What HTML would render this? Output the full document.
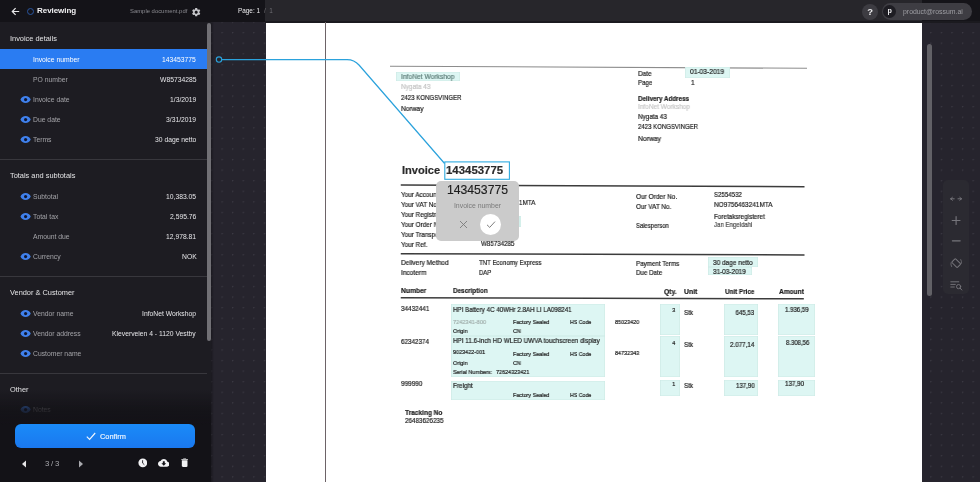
<!DOCTYPE html>
<html><head><meta charset="utf-8">
<style>
*{margin:0;padding:0;box-sizing:border-box}
html,body{width:980px;height:482px;overflow:hidden;-webkit-font-smoothing:antialiased}
body{position:relative;background-color:#26242d;font-family:"Liberation Sans",sans-serif;
background-image:radial-gradient(circle at 0.6px 0.6px,#3c3a44 0.6px,transparent 1px);
background-size:10.58px 10.58px;background-position:210.9px 32px}
.a{position:absolute}
.t{position:absolute;white-space:nowrap;line-height:10px;height:10px;will-change:transform}
.r{text-align:right}
#hdrL{left:0;top:0;width:265px;height:22px;background:#141318}
#hdrM{left:265px;top:0;width:657px;height:22px;background:#27262b}
#hdrR{left:922px;top:0;width:58px;height:22px;background:#151419}
#side{left:0;top:22px;width:211px;height:460px;background:#1d1c22}
#sfade{left:0;top:390px;width:211px;height:92px;background:linear-gradient(rgba(19,18,23,0),rgba(19,18,23,0.82) 22%,#131217 38%,#131217)}
#sthumb{left:207px;top:23px;width:4px;height:318px;background:#717075;border-radius:2px}
.sec{font-size:7.4px;color:#e4e4e6;left:10px}
.lab{font-size:6.8px;color:#a3a3a8;left:32.5px}
.val{font-size:6.78px;color:#e6e6e9;right:783.8px;text-align:right}
.div{left:0;width:207px;height:1px;background:#38373d}
.eye{position:absolute;width:11.2px;height:11.2px;left:19.9px}
#page{left:265.8px;top:22.5px;width:656.2px;height:460px;background:#fff}
.d{position:absolute;white-space:nowrap;line-height:10px;height:10px;color:#1e1e1e;font-size:6.2px;transform-origin:0 50%;will-change:transform;-webkit-text-stroke:0.2px currentColor}
.b{font-weight:bold}
.hl{position:absolute;background:#ddf6f3;box-shadow:inset 0 0 0 0.6px #cde9e5}
.ln{position:absolute;height:1.5px;background:#3a3a3a}
#wrapall{position:absolute;left:0;top:0;width:980px;height:482px}</style></head><body><div id="wrapall">
<!-- header -->
<div class="a" id="hdrL"></div>
<div class="a" id="hdrM"></div>
<div class="a" id="hdrR"></div>
<div class="a" style="left:265px;top:20.8px;width:715px;height:2.4px;background:#1b1a1f"></div>
<svg class="a" style="left:11px;top:7px" width="9" height="9" viewBox="0 0 9 9"><path d="M8.2 4.5H1.4M4.6 1.2L1.3 4.5l3.3 3.3" stroke="#e8e8ea" stroke-width="1.2" fill="none"/></svg>
<div class="a" style="left:27px;top:8px;width:7.2px;height:7.2px;border:1.15px solid #2a56a0;border-radius:50%"></div>
<div class="t b" style="left:37px;top:6.2px;font-size:8px;color:#f2f2f4;letter-spacing:-0.05px">Reviewing</div>
<div class="t" style="left:129.5px;top:5.8px;font-size:5.9px;color:#8a8a90">Sample document.pdf</div>
<svg class="a" style="left:190.7px;top:6.55px" width="10.4" height="10.4" viewBox="0 0 24 24"><path fill="#c6c6ca" d="M19.14 12.94c.04-.3.06-.61.06-.94 0-.32-.02-.64-.07-.94l2.03-1.58a.49.49 0 0 0 .12-.61l-1.92-3.32a.488.488 0 0 0-.59-.22l-2.39.96c-.5-.38-1.03-.7-1.62-.94l-.36-2.54a.484.484 0 0 0-.48-.41h-3.84c-.24 0-.43.17-.47.41l-.36 2.54c-.59.24-1.13.57-1.62.94l-2.39-.96c-.22-.08-.47 0-.59.22L2.74 8.87c-.12.21-.08.47.12.61l2.03 1.58c-.05.3-.09.63-.09.94s.02.64.07.94l-2.03 1.58a.49.49 0 0 0-.12.61l1.92 3.32c.12.22.37.29.59.22l2.39-.96c.5.38 1.03.7 1.62.94l.36 2.54c.05.24.24.41.48.41h3.84c.24 0 .44-.17.47-.41l.36-2.54c.59-.24 1.13-.56 1.62-.94l2.39.96c.22.08.47 0 .59-.22l1.92-3.32c.12-.22.07-.47-.12-.61l-2.01-1.58zM12 15.6c-1.98 0-3.6-1.62-3.6-3.6s1.62-3.6 3.6-3.6 3.6 1.62 3.6 3.6-1.62 3.6-3.6 3.6z"/></svg>
<div class="t" style="left:237.5px;top:6px;font-size:6.4px;color:#ededef">Page: 1</div>
<div class="t" style="left:264px;top:6px;font-size:6.4px;color:#6f6e73">/&nbsp;&nbsp;1</div>
<div class="a" style="left:861.8px;top:3.6px;width:16.2px;height:16.2px;border-radius:50%;background:#3d3c42"></div>
<div class="t b" style="left:865px;top:6.8px;width:10px;text-align:center;font-size:9.4px;color:#ececee">?</div>
<div class="a" style="left:881.8px;top:3px;width:90.2px;height:17px;border-radius:8.5px;background:#3e3d43"></div>
<div class="a" style="left:883px;top:4.8px;width:13.4px;height:13.4px;border-radius:50%;background:#1e1d23"></div>
<div class="t b" style="left:883px;top:6.2px;width:13.4px;text-align:center;font-size:7.2px;color:#e6e6e8">p</div>
<div class="t" style="left:903px;top:6.5px;font-size:6.9px;color:#9f9fa4">product@rossum.ai</div>

<!-- sidebar -->
<div class="a" id="side"></div>
<div class="a" style="left:0;top:49px;width:207px;height:20px;background:#2a7cf2"></div>
<div class="t sec" style="top:34.2px">Invoice details</div>
<div class="t lab" style="top:54.7px;color:#fff">Invoice number</div><div class="t val" style="top:54.7px;color:#fff">143453775</div>
<div class="t lab" style="top:74.7px">PO number</div><div class="t val" style="top:74.7px">W85734285</div>
<div class="t lab" style="top:94.7px">Invoice date</div><div class="t val" style="top:94.7px">1/3/2019</div>
<div class="t lab" style="top:114.7px">Due date</div><div class="t val" style="top:114.7px">3/31/2019</div>
<div class="t lab" style="top:134.7px">Terms</div><div class="t val" style="top:134.7px">30 dage netto</div>
<div class="a div" style="top:159px"></div>
<div class="t sec" style="top:171.2px">Totals and subtotals</div>
<div class="t lab" style="top:191.7px">Subtotal</div><div class="t val" style="top:191.7px">10,383.05</div>
<div class="t lab" style="top:211.7px">Total tax</div><div class="t val" style="top:211.7px">2,595.76</div>
<div class="t lab" style="top:231.7px">Amount due</div><div class="t val" style="top:231.7px">12,978.81</div>
<div class="t lab" style="top:251.7px">Currency</div><div class="t val" style="top:251.7px">NOK</div>
<div class="a div" style="top:276px"></div>
<div class="t sec" style="top:288.2px">Vendor &amp; Customer</div>
<div class="t lab" style="top:308.7px">Vendor name</div><div class="t val" style="top:308.7px">InfoNet Workshop</div>
<div class="t lab" style="top:328.7px">Vendor address</div><div class="t val" style="top:328.7px">Kleverveien 4 - 1120 Vestby</div>
<div class="t lab" style="top:348.7px">Customer name</div>
<div class="a div" style="top:373px"></div>
<div class="t sec" style="top:385.2px">Other</div>
<div class="t lab" style="top:405.2px">Notes</div>
<!-- eyes -->
<svg class="eye" style="top:94.1px" viewBox="0 0 24 24"><path fill="#3f80ec" d="M12 4.5C7 4.5 2.73 7.61 1 12c1.73 4.39 6 7.5 11 7.5s9.27-3.11 11-7.5c-1.73-4.39-6-7.5-11-7.5z"/><circle cx="12" cy="12" r="3.4" fill="#101630"/></svg>
<svg class="eye" style="top:114.1px" viewBox="0 0 24 24"><path fill="#3f80ec" d="M12 4.5C7 4.5 2.73 7.61 1 12c1.73 4.39 6 7.5 11 7.5s9.27-3.11 11-7.5c-1.73-4.39-6-7.5-11-7.5z"/><circle cx="12" cy="12" r="3.4" fill="#101630"/></svg>
<svg class="eye" style="top:134.1px" viewBox="0 0 24 24"><path fill="#3f80ec" d="M12 4.5C7 4.5 2.73 7.61 1 12c1.73 4.39 6 7.5 11 7.5s9.27-3.11 11-7.5c-1.73-4.39-6-7.5-11-7.5z"/><circle cx="12" cy="12" r="3.4" fill="#101630"/></svg>
<svg class="eye" style="top:191.1px" viewBox="0 0 24 24"><path fill="#3f80ec" d="M12 4.5C7 4.5 2.73 7.61 1 12c1.73 4.39 6 7.5 11 7.5s9.27-3.11 11-7.5c-1.73-4.39-6-7.5-11-7.5z"/><circle cx="12" cy="12" r="3.4" fill="#101630"/></svg>
<svg class="eye" style="top:211.1px" viewBox="0 0 24 24"><path fill="#3f80ec" d="M12 4.5C7 4.5 2.73 7.61 1 12c1.73 4.39 6 7.5 11 7.5s9.27-3.11 11-7.5c-1.73-4.39-6-7.5-11-7.5z"/><circle cx="12" cy="12" r="3.4" fill="#101630"/></svg>
<svg class="eye" style="top:251.1px" viewBox="0 0 24 24"><path fill="#3f80ec" d="M12 4.5C7 4.5 2.73 7.61 1 12c1.73 4.39 6 7.5 11 7.5s9.27-3.11 11-7.5c-1.73-4.39-6-7.5-11-7.5z"/><circle cx="12" cy="12" r="3.4" fill="#101630"/></svg>
<svg class="eye" style="top:308.1px" viewBox="0 0 24 24"><path fill="#3f80ec" d="M12 4.5C7 4.5 2.73 7.61 1 12c1.73 4.39 6 7.5 11 7.5s9.27-3.11 11-7.5c-1.73-4.39-6-7.5-11-7.5z"/><circle cx="12" cy="12" r="3.4" fill="#101630"/></svg>
<svg class="eye" style="top:328.1px" viewBox="0 0 24 24"><path fill="#3f80ec" d="M12 4.5C7 4.5 2.73 7.61 1 12c1.73 4.39 6 7.5 11 7.5s9.27-3.11 11-7.5c-1.73-4.39-6-7.5-11-7.5z"/><circle cx="12" cy="12" r="3.4" fill="#101630"/></svg>
<svg class="eye" style="top:348.1px" viewBox="0 0 24 24"><path fill="#3f80ec" d="M12 4.5C7 4.5 2.73 7.61 1 12c1.73 4.39 6 7.5 11 7.5s9.27-3.11 11-7.5c-1.73-4.39-6-7.5-11-7.5z"/><circle cx="12" cy="12" r="3.4" fill="#101630"/></svg>
<svg class="eye" style="top:404.4px" viewBox="0 0 24 24"><path fill="#3f80ec" d="M12 4.5C7 4.5 2.73 7.61 1 12c1.73 4.39 6 7.5 11 7.5s9.27-3.11 11-7.5c-1.73-4.39-6-7.5-11-7.5z"/><circle cx="12" cy="12" r="3.4" fill="#101630"/></svg>
<div class="a" id="sfade"></div>
<div class="a" id="sthumb"></div>
<div class="a" style="left:211px;top:22px;width:3px;height:460px;background:linear-gradient(90deg,rgba(18,17,22,0.6),rgba(18,17,22,0))"></div>
<!-- confirm -->
<div class="a" style="left:15px;top:424.3px;width:180px;height:23.6px;border-radius:6px;background:linear-gradient(#1a8bf8,#1a78ef)"></div>
<svg class="a" style="left:86px;top:432px" width="10" height="9" viewBox="0 0 10 9"><path d="M0.8 4.6L3.6 7.4 9.2 1" stroke="#f0f7ff" stroke-width="1.15" fill="none"/></svg>
<div class="t" style="left:100px;top:432.1px;font-size:7.4px;color:#eef6ff;-webkit-text-stroke:0.15px #eef6ff">Confirm</div>
<!-- bottom bar -->
<svg class="a" style="left:21px;top:460px" width="6" height="8" viewBox="0 0 6 8"><path d="M5 0.5L1 4l4 3.5z" fill="#e6e6e8"/></svg>
<div class="t" style="left:44.8px;top:459px;font-size:7.8px;color:#a9a9ae;letter-spacing:-0.2px">3 / 3</div>
<svg class="a" style="left:78px;top:460px" width="6" height="8" viewBox="0 0 6 8"><path d="M1 0.5L5 4 1 7.5z" fill="#a9a9ae"/></svg>
<svg class="a" style="left:137.7px;top:458.2px" width="9.6" height="9.6" viewBox="0 0 10 10"><circle cx="5" cy="5" r="4.6" fill="#f2f2f4"/><path d="M4.8 2.3V5.3L6.6 7" stroke="#141318" stroke-width="0.9" fill="none"/></svg>
<svg class="a" style="left:157.7px;top:457.2px" width="11.6" height="11.6" viewBox="0 0 24 24"><path fill="#f2f2f4" d="M19.35 10.04C18.67 6.59 15.64 4 12 4 9.11 4 6.6 5.64 5.35 8.04 2.34 8.36 0 10.91 0 14c0 3.31 2.69 6 6 6h13c2.76 0 5-2.24 5-5 0-2.64-2.05-4.78-4.65-4.96zM17 13l-5 5-5-5h3V9h4v4h3z"/></svg>
<svg class="a" style="left:179px;top:457.3px" width="11.3" height="11.3" viewBox="0 0 24 24"><path fill="#f2f2f4" d="M6 19c0 1.1.9 2 2 2h8c1.1 0 2-.9 2-2V7H6v12zM19 4h-3.5l-1-1h-5l-1 1H5v2h14V4z"/></svg>

<!-- document page -->
<div class="a" id="page"></div>
<!--DOC-->
<svg class="a" style="left:0;top:0" width="980" height="482"><line x1="390" y1="66.2" x2="807" y2="68.3" stroke="#8c8c8c" stroke-width="1.1"/><line x1="400.75" y1="184.9" x2="804.5" y2="186.8" stroke="#3c3c3c" stroke-width="1.5"/><line x1="400.75" y1="253.8" x2="804.5" y2="254.9" stroke="#3c3c3c" stroke-width="1.5"/><line x1="400.75" y1="297.7" x2="803.8" y2="298.8" stroke="#3c3c3c" stroke-width="1.5"/></svg>
<div class="hl" style="left:396px;top:72.2px;width:63.8px;height:9.3px"></div>
<div class="hl" style="left:685px;top:66.8px;width:44.7px;height:11.6px"></div>
<div class="hl" style="left:708px;top:256.8px;width:49.8px;height:10.2px"></div>
<div class="hl" style="left:708px;top:267px;width:43.5px;height:8.4px"></div>
<div class="hl" style="left:451.4px;top:304.1px;width:154.1px;height:32.0px"></div>
<div class="hl" style="left:451.4px;top:336.1px;width:154.1px;height:40.6px"></div>
<div class="hl" style="left:451.4px;top:380.6px;width:154.1px;height:19.0px"></div>
<div class="hl" style="left:660px;top:304.1px;width:19.9px;height:30.7px"></div>
<div class="hl" style="left:660px;top:335.5px;width:19.9px;height:41.1px"></div>
<div class="hl" style="left:660px;top:380.3px;width:19.9px;height:15.5px"></div>
<div class="hl" style="left:724.2px;top:304.1px;width:34.1px;height:30.7px"></div>
<div class="hl" style="left:724.2px;top:335.5px;width:34.1px;height:41.1px"></div>
<div class="hl" style="left:724.2px;top:380.3px;width:34.1px;height:15.5px"></div>
<div class="hl" style="left:778.2px;top:304.1px;width:37.3px;height:30.7px"></div>
<div class="hl" style="left:778.2px;top:335.5px;width:37.3px;height:41.1px"></div>
<div class="hl" style="left:778.2px;top:380.3px;width:37.3px;height:15.5px"></div>
<div class="hl" style="left:518.5px;top:216px;width:2.1px;height:11.4px"></div>
<div class="d" style="top:72.40px;font-size:7.0px;left:400.5px;transform:scaleX(0.957);color:#5f7f7a;">InfoNet Workshop</div>
<div class="d" style="top:82.40px;font-size:7.0px;left:400.5px;transform:scaleX(0.924);color:#c4c4c4;">Nygata 43</div>
<div class="d" style="top:92.90px;font-size:7.0px;left:400.5px;transform:scaleX(0.869);">2423 KONGSVINGER</div>
<div class="d" style="top:104.00px;font-size:7.0px;left:400.5px;transform:scaleX(0.948);">Norway</div>
<div class="d" style="top:68.60px;font-size:7.0px;left:638.2px;transform:scaleX(0.919);">Date</div>
<div class="d" style="top:67.40px;font-size:7.0px;left:690px;transform:scaleX(0.949);">01-03-2019</div>
<div class="d" style="top:78.30px;font-size:7.0px;left:638.2px;transform:scaleX(0.874);">Page</div>
<div class="d" style="top:78.40px;font-size:7.0px;left:691px;transform:scaleX(0.910);">1</div>
<div class="d b" style="top:93.80px;font-size:6.9px;left:638px;transform:scaleX(0.910);">Delivery Address</div>
<div class="d" style="top:102.40px;font-size:7.0px;left:638px;transform:scaleX(0.930);color:#c8c8c8;">InfoNet Workshop</div>
<div class="d" style="top:111.60px;font-size:7.0px;left:638px;transform:scaleX(0.908);">Nygata 43</div>
<div class="d" style="top:121.90px;font-size:7.0px;left:638px;transform:scaleX(0.862);">2423 KONGSVINGER</div>
<div class="d" style="top:133.90px;font-size:7.0px;left:638px;transform:scaleX(0.969);">Norway</div>
<div class="d b" style="top:165.20px;font-size:11.0px;left:402px;transform:scaleX(1.008);color:#2b2b2b;">Invoice</div>
<div class="d b" style="top:165.20px;font-size:11.0px;left:445.9px;transform:scaleX(1.037);color:#2b2b2b;">143453775</div>
<div class="d" style="top:189.60px;font-size:7.0px;left:400.8px;transform:scaleX(0.910);">Your Account No.</div>
<div class="d" style="top:199.70px;font-size:7.0px;left:400.8px;transform:scaleX(0.910);">Your VAT No.</div>
<div class="d" style="top:209.80px;font-size:7.0px;left:400.8px;transform:scaleX(0.910);">Your Registration No.</div>
<div class="d" style="top:219.90px;font-size:7.0px;left:400.8px;transform:scaleX(0.910);">Your Order No.</div>
<div class="d" style="top:230.00px;font-size:7.0px;left:400.8px;transform:scaleX(0.910);">Your Transport No.</div>
<div class="d" style="top:240.10px;font-size:7.0px;left:400.8px;transform:scaleX(0.910);">Your Ref.</div>
<div class="d" style="top:197.60px;font-size:7.0px;left:477.5px;transform:scaleX(0.901);">NO9756463241MTA</div>
<div class="d" style="top:239.20px;font-size:7.0px;left:480.5px;transform:scaleX(0.887);">W85734285</div>
<div class="d" style="top:191.60px;font-size:7.0px;left:635.8px;transform:scaleX(0.929);">Our Order No.</div>
<div class="d" style="top:201.70px;font-size:7.0px;left:635.8px;transform:scaleX(0.905);">Our VAT No.</div>
<div class="d" style="top:221.40px;font-size:7.0px;left:635.8px;transform:scaleX(0.840);">Salesperson</div>
<div class="d" style="top:189.90px;font-size:7.0px;left:714.2px;transform:scaleX(0.871);">S2554532</div>
<div class="d" style="top:199.90px;font-size:7.0px;left:714.2px;transform:scaleX(0.919);">NO9756463241MTA</div>
<div class="d" style="top:211.70px;font-size:7.0px;left:714.2px;transform:scaleX(0.900);">Foretaksregisteret</div>
<div class="d" style="top:219.60px;font-size:7.0px;left:714.2px;transform:scaleX(0.865);color:#4a4a4a;">Jan Engeldahl</div>
<div class="d" style="top:257.50px;font-size:7.0px;left:400.5px;transform:scaleX(0.941);">Delivery Method</div>
<div class="d" style="top:267.60px;font-size:7.0px;left:400.5px;transform:scaleX(0.936);">Incoterm</div>
<div class="d" style="top:258.10px;font-size:7.0px;left:478.8px;transform:scaleX(0.870);">TNT Economy Express</div>
<div class="d" style="top:267.90px;font-size:7.0px;left:478.8px;transform:scaleX(0.847);">DAP</div>
<div class="d" style="top:258.80px;font-size:7.0px;left:635.8px;transform:scaleX(0.891);">Payment Terms</div>
<div class="d" style="top:267.70px;font-size:7.0px;left:635.8px;transform:scaleX(0.886);">Due Date</div>
<div class="d" style="top:258.00px;font-size:7.0px;left:713px;transform:scaleX(0.925);">30 dage netto</div>
<div class="d" style="top:267.00px;font-size:7.0px;left:713px;transform:scaleX(0.913);">31-03-2019</div>
<div class="d b" style="top:285.60px;font-size:6.9px;left:401px;transform:scaleX(0.975);">Number</div>
<div class="d b" style="top:286.20px;font-size:6.9px;left:452.8px;transform:scaleX(0.915);">Description</div>
<div class="d b" style="top:286.60px;font-size:6.9px;left:663.7px;transform:scaleX(0.962);">Qty.</div>
<div class="d b" style="top:286.60px;font-size:6.9px;left:684.4px;transform:scaleX(1.000);">Unit</div>
<div class="d b" style="top:286.60px;font-size:6.9px;left:725px;transform:scaleX(0.914);">Unit Price</div>
<div class="d b" style="top:286.60px;font-size:6.9px;left:779.4px;transform:scaleX(0.957);">Amount</div>
<div class="d" style="top:304.40px;font-size:7.0px;left:401px;transform:scaleX(0.910);">34432441</div>
<div class="d" style="top:305.20px;font-size:7.0px;left:453px;transform:scaleX(0.889);">HPI Battery 4C 40WHr 2.8AH LI LA098241</div>
<div class="d" style="top:316.70px;font-size:6.0px;left:453.2px;transform:scaleX(0.936);color:#a3b1ae;">7242341-800</div>
<div class="d" style="top:317.40px;font-size:6.0px;left:512.6px;transform:scaleX(0.902);">Factory Sealed</div>
<div class="d" style="top:317.40px;font-size:6.0px;left:569.7px;transform:scaleX(0.874);">HS Code</div>
<div class="d" style="top:316.70px;font-size:6.0px;left:614.7px;transform:scaleX(0.910);">85023420</div>
<div class="d" style="top:326.40px;font-size:6.0px;left:453px;transform:scaleX(0.910);">Origin</div>
<div class="d" style="top:326.40px;font-size:6.0px;left:512.6px;transform:scaleX(0.910);">CN</div>
<div class="d" style="top:305.30px;font-size:6.0px;right:304.4px;transform-origin:100% 50%;transform:scaleX(0.910);">3</div>
<div class="d" style="top:307.80px;font-size:7.0px;left:684.4px;transform:scaleX(0.909);">Stk</div>
<div class="d" style="top:307.80px;font-size:6.6px;right:225.8px;transform-origin:100% 50%;transform:scaleX(0.922);">645,53</div>
<div class="d" style="top:305.30px;font-size:6.6px;left:785.2px;transform:scaleX(0.923);">1.936,59</div>
<div class="d" style="top:337.20px;font-size:7.0px;left:401.4px;transform:scaleX(0.899);">62342374</div>
<div class="d" style="top:336.10px;font-size:7.0px;left:453px;transform:scaleX(0.906);">HPI 11.6-inch HD WLED UWVA touchscreen display</div>
<div class="d" style="top:347.40px;font-size:6.0px;left:453px;transform:scaleX(0.910);">9023422-001</div>
<div class="d" style="top:349.30px;font-size:6.0px;left:512.6px;transform:scaleX(0.902);">Factory Sealed</div>
<div class="d" style="top:349.30px;font-size:6.0px;left:569.7px;transform:scaleX(0.874);">HS Code</div>
<div class="d" style="top:348.20px;font-size:6.0px;left:614.7px;transform:scaleX(0.910);">84732343</div>
<div class="d" style="top:358.40px;font-size:6.0px;left:453px;transform:scaleX(0.910);">Origin</div>
<div class="d" style="top:358.40px;font-size:6.0px;left:512.6px;transform:scaleX(0.910);">CN</div>
<div class="d" style="top:366.90px;font-size:6.0px;left:453px;transform:scaleX(0.910);">Serial Numbers:</div>
<div class="d" style="top:366.90px;font-size:6.0px;left:496px;transform:scaleX(0.910);">72624323421</div>
<div class="d" style="top:337.60px;font-size:6.0px;right:304.4px;transform-origin:100% 50%;transform:scaleX(0.910);">4</div>
<div class="d" style="top:339.60px;font-size:7.0px;left:684.4px;transform:scaleX(0.909);">Stk</div>
<div class="d" style="top:339.60px;font-size:6.6px;left:730.2px;transform:scaleX(0.950);">2.077,14</div>
<div class="d" style="top:337.60px;font-size:6.6px;left:785.7px;transform:scaleX(0.908);">8.308,56</div>
<div class="d" style="top:378.90px;font-size:7.0px;left:401.4px;transform:scaleX(0.916);">999990</div>
<div class="d" style="top:380.60px;font-size:7.0px;left:453px;transform:scaleX(0.910);">Freight</div>
<div class="d" style="top:390.20px;font-size:6.0px;left:512.6px;transform:scaleX(0.902);">Factory Sealed</div>
<div class="d" style="top:390.20px;font-size:6.0px;left:569.7px;transform:scaleX(0.874);">HS Code</div>
<div class="d" style="top:379.40px;font-size:6.0px;right:304.4px;transform-origin:100% 50%;transform:scaleX(0.910);">1</div>
<div class="d" style="top:380.70px;font-size:7.0px;left:684.4px;transform:scaleX(0.909);">Stk</div>
<div class="d" style="top:380.70px;font-size:6.6px;left:735.9px;transform:scaleX(0.927);">137,90</div>
<div class="d" style="top:379.40px;font-size:6.6px;left:785.2px;transform:scaleX(0.947);">137,90</div>
<div class="d b" style="top:407.80px;font-size:6.9px;left:404.5px;transform:scaleX(0.948);">Tracking No</div>
<div class="d" style="top:415.60px;font-size:7.0px;left:404.5px;transform:scaleX(0.899);">26483626235</div>
<!--/DOC-->
<div class="a" style="left:324.5px;top:22px;width:1.6px;height:460px;background:#6d6367"></div>
<div class="a" style="left:922px;top:22px;width:58px;height:460px"></div>
<!--OVL-->
<svg class="a" style="left:0;top:0" width="980" height="482"><path d="M221.7 59.6H347C352.5 59.6 355.5 61 359 65L444.6 163.5" stroke="#2ba2dc" stroke-width="1.2" fill="none"/><circle cx="219" cy="59.6" r="2.7" stroke="#2ba2dc" stroke-width="1.1" fill="#26252b"/><rect x="444.8" y="161.9" width="64.6" height="17.4" stroke="#30abe0" stroke-width="1.1" fill="none"/></svg>
<div class="a" style="left:436px;top:181px;width:83px;height:59.7px;border-radius:5px;background:#cbcbcb"></div>
<div class="t" style="left:436px;width:83px;text-align:center;top:185.1px;line-height:10px;font-size:12.2px;color:#1d1d1d;-webkit-text-stroke:0.15px #1d1d1d">143453775</div>
<div class="t" style="left:436px;width:83px;text-align:center;top:200.5px;font-size:6.9px;color:#7a7a7a">Invoice number</div>
<svg class="a" style="left:458.8px;top:220px" width="9" height="9" viewBox="0 0 9 9"><path d="M1 1L8 8M8 1L1 8" stroke="#7b7b7b" stroke-width="0.9"/></svg>
<div class="a" style="left:479.8px;top:213.7px;width:21px;height:21px;border-radius:50%;background:#fff"></div>
<svg class="a" style="left:485.5px;top:220px" width="10" height="9" viewBox="0 0 10 9"><path d="M1 4.8L3.7 7.4 9 1.6" stroke="#6f6f6f" stroke-width="0.9" fill="none"/></svg>
<!--/OVL-->
<!-- right scrollbar + toolbar -->
<div class="a" style="left:927px;top:43.5px;width:4.5px;height:252px;border-radius:2.5px;background:#626166"></div>
<div class="a" style="left:942.5px;top:180px;width:26.5px;height:114px;border-radius:5px;background:#2b2a31"></div>
<svg class="a" style="left:0;top:0" width="980" height="482"><g stroke="#76757b" stroke-width="1" fill="none" stroke-linecap="round">
<path d="M950.8 198.8h3.4M950.8 198.8l1.6-1.5M950.8 198.8l1.6 1.5M961.4 198.8h-3.4M961.4 198.8l-1.6-1.5M961.4 198.8l-1.6 1.5"/>
<path d="M952.2 220.5h7.8M956.1 216.6v7.8" stroke-width="1.15"/>
<path d="M952.4 240.8h7.8" stroke-width="1.15"/>
<g transform="rotate(-45 956.2 263.1)"><rect x="953.6" y="259.2" width="5.2" height="7.8" rx="0.8"/></g>
<path d="M951.6 266.6a5.2 5.2 0 0 1 -0.6-3.8M960.8 259.6a5.2 5.2 0 0 1 0.6 3.8" stroke-width="0.8"/>
<path d="M950.8 281.8h8M950.8 284.4h4.5M950.8 287h3.5" stroke-width="0.95"/>
<circle cx="958.6" cy="286.6" r="2.1" stroke-width="0.95"/><path d="M960.1 288.1l1.7 1.9" stroke-width="1"/>
</g></svg>

</div></body></html>
